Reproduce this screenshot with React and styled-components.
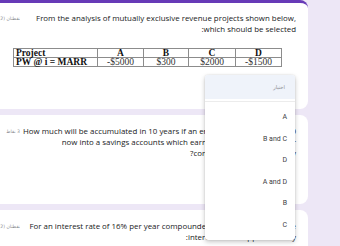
import React from "react";
import styled, { createGlobalStyle } from "styled-components";

const GlobalStyle = createGlobalStyle`
  html, body {
    margin: 0;
    padding: 0;
    background: #ede7f6;
    overflow: hidden;
  }
  body {
    width: 340px;
    height: 246px;
    font-family: "Open Sans", "DejaVu Sans", sans-serif;
  }
`;

const Page = styled.div`
  position: relative;
  width: 308px;
  display: flex;
  flex-direction: column;
  gap: 6px;
  direction: rtl;
`;

const Card = styled.section`
  background: #ffffff;
  border-radius: 0 8px 8px 0;
  border-top: ${(p) => (p.$accent ? "3px solid #673ab7" : "none")};
  padding: ${(p) => (p.$accent ? 10 : 11)}px 12px ${(p) => p.$pb}px 0;
  display: flex;
  flex-direction: column;
`;

const TitleRow = styled.div`
  display: flex;
  align-items: flex-start;
  gap: 1px;
`;

const Title = styled.div`
  flex: 1;
  min-width: 0;
  font-size: 7.9px;
  line-height: 11px;
  color: #202124;
  white-space: nowrap;
  text-align: right;
`;

const Points = styled.div`
  width: 20px;
  flex: none;
  font-family: "DejaVu Sans", sans-serif;
  font-size: 4.6px;
  line-height: 11px;
  color: #8a8d91;
  white-space: nowrap;
  overflow: hidden;
  text-align: right;
`;

const TableWrap = styled.div`
  direction: ltr;
  margin-top: 12.5px;
  padding-left: 13px;
`;

const Table = styled.table`
  border-collapse: collapse;
  font-family: "Liberation Serif", serif;
  font-size: 9.5px;
  color: #111;
`;

const Cell = styled.td`
  border: 1px solid #8c8c8c;
  height: 8px;
  line-height: 8px;
  padding: 0 2px;
  width: ${(p) => p.$w}px;
  box-sizing: border-box;
  text-align: ${(p) => (p.$left ? "left" : "center")};
  font-weight: ${(p) => (p.$bold ? 700 : 400)};
  white-space: nowrap;
  color: ${(p) => (p.$bold ? "#111" : "#333")};
`;

const Menu = styled.div`
  position: absolute;
  left: 205px;
  top: 75px;
  width: 90px;
  height: 165px;
  background: #fff;
  border-radius: 3px;
  box-shadow: 0 2px 5px rgba(0, 0, 0, 0.22), 0 0 2px rgba(0, 0, 0, 0.12);
  direction: rtl;
  display: flex;
  flex-direction: column;
  overflow: hidden;
`;

const MenuHeader = styled.div`
  height: 24px;
  background: #eff3fa;
  display: flex;
  align-items: center;
  padding-right: 10px;
  font-family: "DejaVu Sans", sans-serif;
  font-size: 5.2px;
  color: #8c8f94;
`;

const Divider = styled.div`
  height: 1px;
  margin: 2px 0 4.5px;
  background: #ececec;
`;

const MenuItem = styled.div`
  height: 21.5px;
  display: flex;
  align-items: center;
  padding-right: 8px;
  font-family: Roboto, "Liberation Sans", sans-serif;
  font-size: 7px;
  color: #3c4043;
`;

const table = {
  head: ["Project", "A", "B", "C", "D"],
  row: ["PW @ i = MARR", "-$5000", "$300", "$2000", "-$1500"],
  widths: [84, 46, 45, 47, 46],
};

const options = ["A", "B and C", "D", "A and D", "B", "C"];

export default function App() {
  return (
    <>
      <GlobalStyle />
      <Page>
        <Card $accent $pb={42}>
          <TitleRow>
            <Title>
              From the analysis of mutually exclusive revenue projects shown below,{"\u200E"}
              <br />
              which should be selected:
            </Title>
            <Points>نقطتان (2)</Points>
          </TitleRow>
          <TableWrap>
            <Table>
              <tbody>
                <tr>
                  {table.head.map((h, i) => (
                    <Cell key={h} $w={table.widths[i]} $left={i === 0} $bold>
                      {h}
                    </Cell>
                  ))}
                </tr>
                <tr>
                  {table.row.map((v, i) => (
                    <Cell key={v} $w={table.widths[i]} $left={i === 0} $bold={i === 0}>
                      {v}
                    </Cell>
                  ))}
                </tr>
              </tbody>
            </Table>
          </TableWrap>
        </Card>
        <Card $pb={45}>
          <TitleRow>
            <Title>
              How much will be accumulated in 10 years if an engineer deposits $20,000
              <br />
              now into a savings accounts which earns interest of 8% per year
              <br />
              compounded semi-annually?
            </Title>
            <Points>3 نقاط</Points>
          </TitleRow>
        </Card>
        <Card $pb={30}>
          <TitleRow>
            <Title>
              For an interest rate of 16% per year compounded quarterly, the effective
              <br />
              interest rate is approximately:
            </Title>
            <Points>نقطتان (2)</Points>
          </TitleRow>
        </Card>
        <Menu>
          <MenuHeader>اختيار</MenuHeader>
          <Divider />
          {options.map((o) => (
            <MenuItem key={o}>{o}</MenuItem>
          ))}
        </Menu>
      </Page>
    </>
  );
}
